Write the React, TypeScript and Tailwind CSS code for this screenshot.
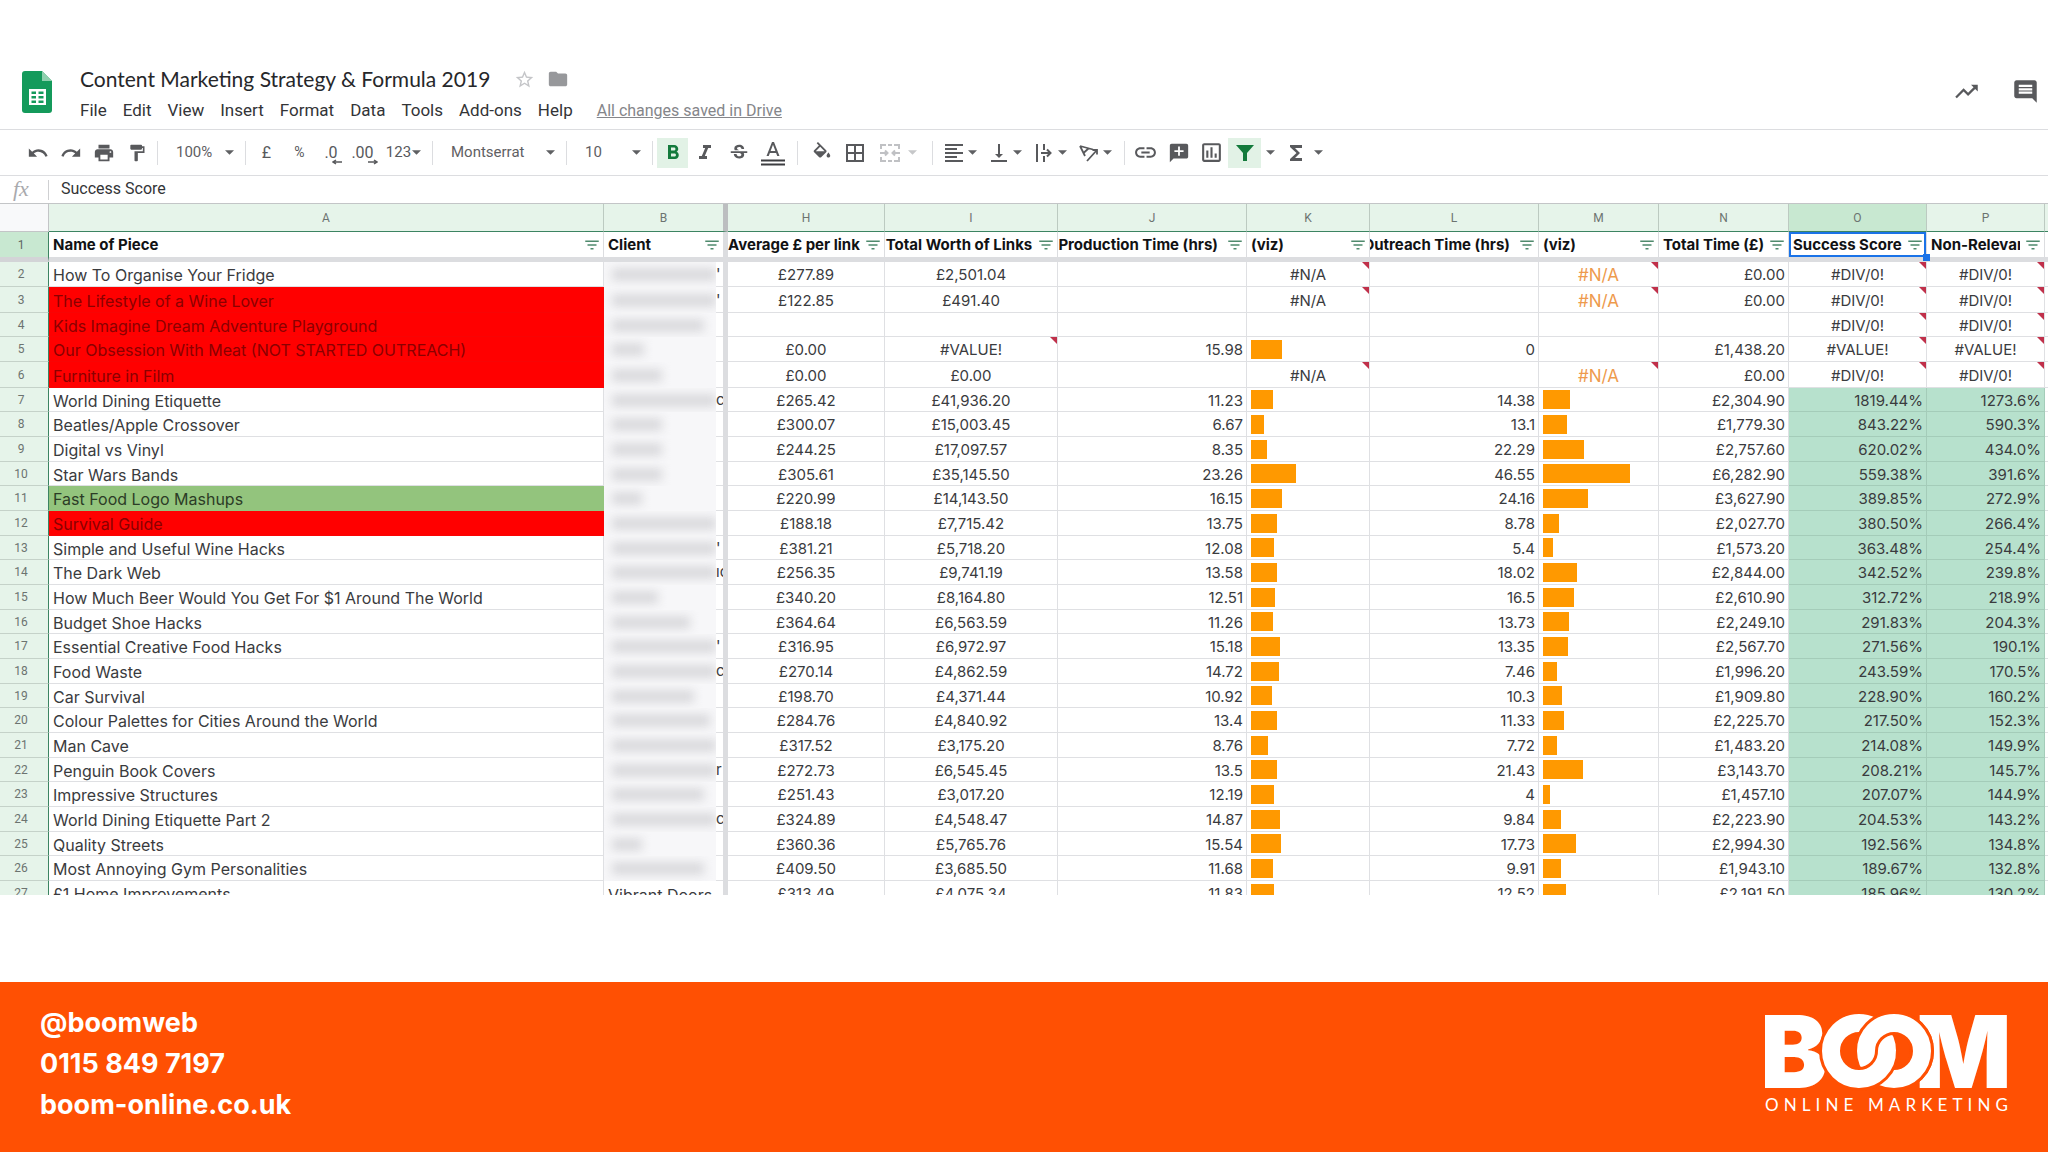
import React from "react";
import clsx from "clsx";
import {
  MdAddComment,
  MdBorderAll,
  MdComment,
  MdFilterList,
  MdFolder,
  MdFormatAlignLeft,
  MdFormatBold,
  MdFormatColorFill,
  MdFormatItalic,
  MdFormatPaint,
  MdFunctions,
  MdInsertLink,
  MdOutlineInsertChart,
  MdPrint,
  MdRedo,
  MdStarBorder,
  MdStrikethroughS,
  MdTrendingUp,
  MdUndo,
  MdVerticalAlignBottom,
} from "react-icons/md";

interface IRow {
  name: string;
  // width in px of the redacted client name and what sticks out after it
  client: number;
  rest?: string;
  values: string[];
}

// values: avg per link, total worth, production, outreach, total time, score, non-relevant
const rows: IRow[] = [
  { name: "How To Organise Your Fridge", client: 104, rest: "'", values: ["£277.89", "£2,501.04", "#N/A", "#N/A", "£0.00", "#DIV/0!", "#DIV/0!"] },
  { name: "The Lifestyle of a Wine Lover", client: 104, rest: "'", values: ["£122.85", "£491.40", "#N/A", "#N/A", "£0.00", "#DIV/0!", "#DIV/0!"] },
  { name: "Kids Imagine Dream Adventure Playground", client: 92, values: ["", "", "", "", "", "#DIV/0!", "#DIV/0!"] },
  { name: "Our Obsession With Meat (NOT STARTED OUTREACH)", client: 32, values: ["£0.00", "#VALUE!", "15.98", "0", "£1,438.20", "#VALUE!", "#VALUE!"] },
  { name: "Furniture in Film", client: 50, values: ["£0.00", "£0.00", "#N/A", "#N/A", "£0.00", "#DIV/0!", "#DIV/0!"] },
  { name: "World Dining Etiquette", client: 104, rest: "c", values: ["£265.42", "£41,936.20", "11.23", "14.38", "£2,304.90", "1819.44%", "1273.6%"] },
  { name: "Beatles/Apple Crossover", client: 50, values: ["£300.07", "£15,003.45", "6.67", "13.1", "£1,779.30", "843.22%", "590.3%"] },
  { name: "Digital vs Vinyl", client: 50, values: ["£244.25", "£17,097.57", "8.35", "22.29", "£2,757.60", "620.02%", "434.0%"] },
  { name: "Star Wars Bands", client: 50, values: ["£305.61", "£35,145.50", "23.26", "46.55", "£6,282.90", "559.38%", "391.6%"] },
  { name: "Fast Food Logo Mashups", client: 30, values: ["£220.99", "£14,143.50", "16.15", "24.16", "£3,627.90", "389.85%", "272.9%"] },
  { name: "Survival Guide", client: 104, values: ["£188.18", "£7,715.42", "13.75", "8.78", "£2,027.70", "380.50%", "266.4%"] },
  { name: "Simple and Useful Wine Hacks", client: 104, rest: "'", values: ["£381.21", "£5,718.20", "12.08", "5.4", "£1,573.20", "363.48%", "254.4%"] },
  { name: "The Dark Web", client: 104, rest: "ıc", values: ["£256.35", "£9,741.19", "13.58", "18.02", "£2,844.00", "342.52%", "239.8%"] },
  { name: "How Much Beer Would You Get For $1 Around The World", client: 46, values: ["£340.20", "£8,164.80", "12.51", "16.5", "£2,610.90", "312.72%", "218.9%"] },
  { name: "Budget Shoe Hacks", client: 78, values: ["£364.64", "£6,563.59", "11.26", "13.73", "£2,249.10", "291.83%", "204.3%"] },
  { name: "Essential Creative Food Hacks", client: 104, rest: "'", values: ["£316.95", "£6,972.97", "15.18", "13.35", "£2,567.70", "271.56%", "190.1%"] },
  { name: "Food Waste", client: 104, rest: "c", values: ["£270.14", "£4,862.59", "14.72", "7.46", "£1,996.20", "243.59%", "170.5%"] },
  { name: "Car Survival", client: 82, values: ["£198.70", "£4,371.44", "10.92", "10.3", "£1,909.80", "228.90%", "160.2%"] },
  { name: "Colour Palettes for Cities Around the World", client: 98, values: ["£284.76", "£4,840.92", "13.4", "11.33", "£2,225.70", "217.50%", "152.3%"] },
  { name: "Man Cave", client: 104, values: ["£317.52", "£3,175.20", "8.76", "7.72", "£1,483.20", "214.08%", "149.9%"] },
  { name: "Penguin Book Covers", client: 104, rest: "r", values: ["£272.73", "£6,545.45", "13.5", "21.43", "£3,143.70", "208.21%", "145.7%"] },
  { name: "Impressive Structures", client: 92, values: ["£251.43", "£3,017.20", "12.19", "4", "£1,457.10", "207.07%", "144.9%"] },
  { name: "World Dining Etiquette Part 2", client: 104, rest: "c", values: ["£324.89", "£4,548.47", "14.87", "9.84", "£2,223.90", "204.53%", "143.2%"] },
  { name: "Quality Streets", client: 30, values: ["£360.36", "£5,765.76", "15.54", "17.73", "£2,994.30", "192.56%", "134.8%"] },
  { name: "Most Annoying Gym Personalities", client: 92, values: ["£409.50", "£3,685.50", "11.68", "9.91", "£1,943.10", "189.67%", "132.8%"] },
  { name: "£1 Home Improvements", client: 0, values: ["£313.49", "£4,075.34", "11.83", "12.52", "£2,191.50", "185.96%", "130.2%"] },
];

const columns = [
  { letter: "A", title: "Name of Piece", width: "" },
  { letter: "B", title: "Client", width: "w-[124px]" },
  { letter: "H", title: "Average £ per link", width: "w-[157px]", align: "center" },
  { letter: "I", title: "Total Worth of Links", width: "w-[173px]", align: "center" },
  { letter: "J", title: "Production Time (hrs)", width: "w-[189px]", align: "end" },
  { letter: "K", title: "(viz)", width: "w-[123px]" },
  { letter: "L", title: "Outreach Time (hrs)", width: "w-[169px]", align: "end" },
  { letter: "M", title: "(viz)", width: "w-[120px]" },
  { letter: "N", title: "Total Time (£)", width: "w-[130px]" },
  { letter: "O", title: "Success Score", width: "w-[138px]" },
  { letter: "P", title: "Non-Relevant", width: "w-[118px]" },
];

const menus = ["File", "Edit", "View", "Insert", "Format", "Data", "Tools", "Add-ons", "Help"];

const isError = (value: string) => value.startsWith("#");

const Separator = ({ wide }: { wide?: boolean }) => (
  <div className={clsx("h-6 w-px shrink-0 bg-[#dcdde0]", wide ? "mx-[7px]" : "mx-1")} />
);

const Caret = ({ faded }: { faded?: boolean }) => (
  <svg viewBox="0 0 10 5" className={clsx("h-[5px] w-[9px] shrink-0", faded ? "text-[#c6c7c9]" : "text-[#5f6063]")}>
    <path d="M0 0h10L5 5z" fill="currentColor" />
  </svg>
);

interface IToolProps {
  label: string;
  active?: boolean;
  className?: string;
  children: React.ReactNode;
}

const Tool: React.FC<IToolProps> = ({ label, active, className, children }) => (
  <button
    type="button"
    aria-label={label}
    className={clsx(
      "flex h-[30px] shrink-0 items-center justify-center",
      className ?? "w-[33px]",
      active ? "bg-[#e2f2e6] text-[#137a3c]" : "text-[#58595c]"
    )}
  >
    {children}
  </button>
);

// icon with its own drop-down arrow
const SplitTool: React.FC<IToolProps> = ({ label, children }) => (
  <button type="button" aria-label={label} className="flex h-[30px] w-[45px] shrink-0 items-center text-[#58595c]">
    <span className="flex w-[28px] justify-center">{children}</span>
    <Caret />
  </button>
);

const Picker = ({ label, value, className }: { label: string; value: string; className: string }) => (
  <label className={clsx("relative flex shrink-0 items-center", className)}>
    <select
      aria-label={label}
      className="w-full appearance-none bg-transparent pl-[14px] font-['Roboto',sans-serif] text-[15px] text-[#5f6063] outline-none"
    >
      <option>{value}</option>
    </select>
    <span className="pointer-events-none absolute right-[7px]">
      <Caret />
    </span>
  </label>
);

const DecimalIcon = ({ text, more }: { text: string; more?: boolean }) => (
  <span className="relative font-['Roboto',sans-serif] text-[16px]">
    {text}
    <svg viewBox="0 0 10 6" className="absolute -right-1 bottom-0 h-[6px] w-[10px]">
      <path d={more ? "M0 3h8M6 1l3 2-3 2" : "M10 3H2M4 1L1 3l3 2"} fill="none" stroke="currentColor" strokeWidth="1.5" />
    </svg>
  </span>
);

const Toolbar = () => (
  <div className="flex h-[46px] items-center border-b border-[#dcdde0] pl-[21px]">
    <Tool label="Undo"><MdUndo size={22} /></Tool>
    <Tool label="Redo"><MdRedo size={22} /></Tool>
    <Tool label="Print"><MdPrint size={22} /></Tool>
    <Tool label="Paint format"><MdFormatPaint size={20} /></Tool>
    <Separator />
    <Picker label="Zoom" value="100%" className="w-[79px]" />
    <Separator />
    <Tool label="Format as currency"><span className="font-['Roboto',sans-serif] text-[16px]">£</span></Tool>
    <Tool label="Format as percent"><span className="font-['Roboto',sans-serif] text-[14px]">%</span></Tool>
    <Tool label="Decrease decimal places" className="w-[30px]"><DecimalIcon text=".0" /></Tool>
    <Tool label="Increase decimal places"><DecimalIcon text=".00" more /></Tool>
    <Tool label="More formats" className="w-[49px] gap-px">
      <span className="font-['Roboto',sans-serif] text-[15px]">123</span>
      <Caret />
    </Tool>
    <Separator />
    <Picker label="Font" value="Montserrat" className="w-[125px]" />
    <Separator />
    <Picker label="Font size" value="10" className="w-[77px]" />
    <Separator />
    <Tool label="Bold" active className="w-[31px]"><MdFormatBold size={24} /></Tool>
    <Tool label="Italic" className="w-[34px]"><MdFormatItalic size={24} /></Tool>
    <Tool label="Strikethrough" className="w-[34px]"><MdStrikethroughS size={22} /></Tool>
    <Tool label="Text colour" className="w-[34px]">
      <svg viewBox="0 0 24 26" className="h-[26px] w-6">
        <path d="M11 2L5.500 16h2.250l1.120-3h6.250l1.120 3h2.250L13 2h-2zm-1.380 9L12 4.670 14.380 11H9.620z" fill="currentColor" />
        <path d="M0 20.500h24M0 24.500h24" stroke="#3c3d40" strokeWidth="1.800" />
      </svg>
    </Tool>
    <Separator wide />
    <Tool label="Fill colour"><MdFormatColorFill size={22} className="[clip-path:inset(0_0_18%_0)]" /></Tool>
    <Tool label="Borders"><MdBorderAll size={24} /></Tool>
    <button type="button" aria-label="Merge cells" className="flex w-[54px] shrink-0 items-center gap-2 pl-[9px] text-[#c0c1c4]">
      <svg viewBox="0 0 20 18" className="h-[18px] w-5" fill="none" stroke="currentColor" strokeWidth="2">
        <path d="M6 1H1v4M8 1h4M14 1h5v4M1 13v4h5M8 17h4M19 13v4h-5M0 9h7M13 9h7M5 6.500L7.500 9 5 11.500M15 6.500L12.500 9l2.500 2.500" />
      </svg>
      <Caret faded />
    </button>
    <Separator wide />
    <SplitTool label="Horizontal align"><MdFormatAlignLeft size={24} /></SplitTool>
    <SplitTool label="Vertical align"><MdVerticalAlignBottom size={24} /></SplitTool>
    <SplitTool label="Text wrapping">
      <svg viewBox="0 0 18 18" className="h-[18px] w-[18px]" fill="none" stroke="currentColor" strokeWidth="2">
        <path d="M2 0v18M9 0v6M9 12v6M6 9h9M12 5.500L15.500 9 12 12.500" />
      </svg>
    </SplitTool>
    <SplitTool label="Text rotation">
      <svg viewBox="0 0 20 18" className="h-[18px] w-5" fill="none" stroke="currentColor" strokeWidth="1.800">
        <path d="M1 2l13 3.500M1 2l5 10M4.500 9l5.500-5M8 17L18 6M13.500 6H18v4.500" />
      </svg>
    </SplitTool>
    <Separator />
    <Tool label="Insert link"><MdInsertLink size={25} /></Tool>
    <Tool label="Insert comment"><MdAddComment size={22} className="-scale-x-100" /></Tool>
    <Tool label="Insert chart"><MdOutlineInsertChart size={25} /></Tool>
    <Tool label="Filter" active>
      <svg viewBox="0 0 18 16" className="h-4 w-[18px]">
        <path d="M0 0h18l-7 8v8H7V8z" fill="currentColor" />
      </svg>
    </Tool>
    <Tool label="Filter views" className="w-[18px]"><Caret /></Tool>
    <Tool label="Functions"><MdFunctions size={24} /></Tool>
    <Tool label="More functions" className="w-3"><Caret /></Tool>
  </div>
);

const SheetsLogo = () => (
  <svg viewBox="0 0 30 42" className="h-[42px] w-[30px]">
    <path d="M3 0h17l10 10v29a3 3 0 0 1-3 3H3a3 3 0 0 1-3-3V3a3 3 0 0 1 3-3z" fill="#149a5b" />
    <path d="M20 0l10 10H20z" fill="#8fd0ae" />
    <path d="M7 18h17v16H7zM9.500 20.500v2.500h4.500v-2.500zM16.500 20.500v2.500h5v-2.500zM9.500 25v2.500h4.500V25zM16.500 25v2.500h5V25zM9.500 29.500V32h4.500v-2.500zM16.500 29.500V32h5v-2.500z" fill="#fff" fillRule="evenodd" />
  </svg>
);

const TitleBar = () => (
  <header className="flex h-[82px] items-start justify-between border-b border-[#dcdde0] font-['Roboto',sans-serif]">
    <div className="flex pl-[22px]">
      <div className="pt-[23px]">
        <SheetsLogo />
      </div>
      <div className="pl-7 pt-[17px]">
        <div className="flex h-7 items-center">
          <h1 className="font-['Lato',sans-serif] text-[21px] text-[#26272a]">Content Marketing Strategy &amp; Formula 2019</h1>
          <button type="button" aria-label="Star" className="ml-6 text-[#c4c5c8]"><MdStarBorder size={21} /></button>
          <button type="button" aria-label="Move to folder" className="ml-3 text-[#97989b]"><MdFolder size={22} /></button>
        </div>
        <nav className="flex h-9 items-center gap-4 text-[17px] text-[#333437]">
          {menus.map((menu) => (
            <button type="button" key={menu}>{menu}</button>
          ))}
          <a href="#" className="ml-2 text-[16px] text-[#85868a] underline">All changes saved in Drive</a>
        </nav>
      </div>
    </div>
    <div className="flex items-center gap-8 pr-[9px] pt-[30px] text-[#58595c]">
      <button type="button" aria-label="Activity"><MdTrendingUp size={27} /></button>
      <button type="button" aria-label="Comments"><MdComment size={27} /></button>
    </div>
  </header>
);

const FormulaBar = () => (
  <div className="flex h-7 items-center border-b border-[#c3c5c7]">
    <label htmlFor="formula" className="w-12 pb-0.5 pl-[13px] font-['Liberation_Serif',serif] text-[22px] leading-6 italic text-[#a9aaad]">fx</label>
    <div className="h-5 w-px bg-[#cfd0d2]" />
    <input id="formula" defaultValue="Success Score" className="flex-1 pb-0.5 pl-3 font-['Roboto',sans-serif] text-[16px] text-[#333437] outline-none" />
  </div>
);

const ErrorMark = () => (
  <svg viewBox="0 0 7 7" className="absolute top-0 right-0 h-[7px] w-[7px]">
    <path d="M0 0h7v7z" fill="#c0304a" />
  </svg>
);

interface ICellProps {
  value: string;
  align?: "center" | "right";
  highlight?: boolean;
  className?: string;
}

const Cell: React.FC<ICellProps> = ({ value, align, highlight, className }) => (
  <td
    className={clsx(
      "relative border-r border-b px-1 pt-0.5",
      highlight ? "border-[#a4ccb9] bg-[#b7e1cd]" : "border-[#dfe0e3]",
      align === "right" && !isError(value) ? "pr-[3px] text-right" : "text-center",
      className
    )}
  >
    {value}
    {isError(value) && <ErrorMark />}
  </td>
);

const VizCell = ({ value, scale, accent }: { value: string; scale: number; accent?: boolean }) => {
  if (isError(value)) {
    return <Cell value={value} className={accent ? "text-[17px] text-[#ee9a4d]" : ""} />;
  }
  return (
    <td className="border-r border-b border-[#dfe0e3] pl-1">
      {Number(value) > 0 && <div className="h-[19px] bg-[#ff9900]" style={{ width: Math.round(Number(value) * scale) }} />}
    </td>
  );
};

const nameColour = (num: number) => {
  if ((num >= 3 && num <= 6) || num === 12) return "bg-[#ff0000] border-[#f80404] text-[#8a0000]";
  if (num === 11) return "bg-[#93c47d] border-[#93c47d] text-[#2c3c26]";
  return "border-[#dfe0e3]";
};

const rowHeight = (num: number) => {
  if (num === 3 || num === 6) return "h-[26px]";
  return num % 3 === 1 ? "h-6" : "h-[25px]";
};

const ClientCell = ({ row, height }: { row: IRow; height: string }) => (
  <td className="border-r-[5px] border-[#dcdde0] p-0">
    {row.client ? (
      <div className={clsx("flex", height)}>
        <div className="flex w-[112px] items-center overflow-hidden bg-[#f7f7f9] pl-2">
          <div className="h-[13px] bg-[#dadadd] blur-[5px]" style={{ width: row.client }} />
        </div>
        <div className="flex flex-1 items-center overflow-hidden border-b border-[#dfe0e3]">{row.rest}</div>
      </div>
    ) : (
      <div className="px-1 pt-0.5 text-[16px] whitespace-nowrap">Vibrant Doors</div>
    )}
  </td>
);

const Sheet = () => (
  <table className="w-full table-fixed border-separate border-spacing-0 font-['Inter',sans-serif] text-[15px] leading-5 text-[#3a3b3e]">
    <colgroup>
      <col className="w-[49px]" />
      {columns.map((col) => (
        <col key={col.letter} className={col.width} />
      ))}
      <col className="w-[3px]" />
    </colgroup>
    <thead>
      <tr className="h-7 bg-[#e6f4ea] font-['Roboto',sans-serif] text-[12px] text-[#6c7370]">
        <td className="border-r border-b border-[#c3c5c7] bg-[#f8f9fa]" />
        {columns.map((col) => (
          <th
            key={col.letter}
            scope="col"
            className={clsx(
              "border-b border-b-[#3c8462] font-normal",
              col.letter === "B" ? "border-r-[5px] border-r-[#bcbec0]" : "border-r border-r-[#bccac1]",
              col.letter === "O" && "bg-[#c8e8d1]"
            )}
          >
            {col.letter}
          </th>
        ))}
        <td className="border-b border-b-[#3c8462]" />
      </tr>
      <tr className="h-[30px]">
        <th scope="row" className="border-r border-b-[5px] border-r-[#3c8462] border-b-[#d3d4d7] bg-[#c8e8d1] pr-1.5 font-['Roboto',sans-serif] text-[12px] font-normal text-[#5f6663]">1</th>
        {columns.map((col) => (
          <th
            key={col.letter}
            scope="col"
            className={clsx(
              "relative border-b-[5px] border-[#dcdde0] p-0 font-bold text-[#111214]",
              col.letter === "B" ? "border-r-[5px]" : "border-r"
            )}
          >
            <div className="flex h-[25px] items-center">
              <span
                className={clsx(
                  "flex flex-1 overflow-hidden whitespace-nowrap",
                  col.align === "center" && "justify-center",
                  col.align === "end" && "mr-1 justify-end",
                  !col.align && "pl-1"
                )}
              >
                {col.title}
              </span>
              <button type="button" aria-label={"Filter " + col.letter} className="mr-0.5 ml-1 text-[#4f8a6d]">
                <MdFilterList size={18} />
              </button>
            </div>
            {col.letter === "O" && (
              <>
                <div className="absolute inset-0 border-2 border-[#1a73e8]" />
                <div className="absolute -right-1 -bottom-1 z-10 h-[7px] w-[7px] bg-[#1a73e8]" />
              </>
            )}
          </th>
        ))}
        <td className="border-b-[5px] border-[#dcdde0]" />
      </tr>
    </thead>
    <tbody>
      {rows.map((row, index) => {
        const num = index + 2;
        const [average, worth, production, outreach, total, score, relevant] = row.values;
        return (
          <tr key={row.name} className={rowHeight(num)}>
            <th scope="row" className="border-r border-b border-r-[#3c8462] border-b-[#c5d2c9] bg-[#e6f4ea] p-0 pr-1.5 font-['Roboto',sans-serif] text-[12px] font-normal text-[#6c7370]">
              {num}
            </th>
            <td className={clsx("border-r border-b px-1 pt-0.5 text-[16px] whitespace-nowrap", nameColour(num))}>{row.name}</td>
            <ClientCell row={row} height={rowHeight(num)} />
            <Cell value={average} />
            <Cell value={worth} />
            <Cell value={isError(production) ? "" : production} align="right" />
            <VizCell value={production} scale={1.92} />
            <Cell value={isError(outreach) ? "" : outreach} align="right" />
            <VizCell value={outreach} scale={1.86} accent />
            <Cell value={total} align="right" />
            <Cell value={score} align="right" highlight={num > 6} />
            <Cell value={relevant} align="right" highlight={num > 6} />
            <td className="border-b border-[#dfe0e3]" />
          </tr>
        );
      })}
    </tbody>
  </table>
);

const BoomLogo = () => (
  <svg viewBox="0 0 248 112" className="h-28 w-[248px]" role="img" aria-label="Boom Online Marketing">
    <g fill="#fff" className="font-['Inter',sans-serif] font-black">
      <text x="-5" y="78" fontSize="101">B</text>
      <text x="150" y="78" fontSize="101">M</text>
    </g>
    <g fill="none">
      <circle cx="94" cy="41" r="28" stroke="#ff5003" strokeWidth="24" />
      <circle cx="129" cy="41" r="28" stroke="#ff5003" strokeWidth="24" />
      <circle cx="94" cy="41" r="28" stroke="#fff" strokeWidth="18" />
      {/* right ring goes over the left one at the top, under it at the bottom */}
      <circle cx="129" cy="41" r="28" stroke="#ff5003" strokeWidth="24" />
      <circle cx="129" cy="41" r="28" stroke="#fff" strokeWidth="18" />
      <path d="M122 41A28 28 0 0 1 94 69" stroke="#ff5003" strokeWidth="24" />
      <path d="M122 40A28 28 0 0 1 93 69" stroke="#fff" strokeWidth="18" />
    </g>
    <text x="0" y="101" fontSize="17" fill="#fff" className="font-['Lato',sans-serif] tracking-[0.3em]">ONLINE MARKETING</text>
  </svg>
);

const Footer = () => (
  <footer className="mt-[87px] flex h-[170px] shrink-0 justify-between bg-[#ff5003] pt-5 pr-[35px] pl-10 text-white">
    <address className="font-['Inter',sans-serif] text-[27px] leading-[41px] font-bold not-italic">
      <p>@boomweb</p>
      <p>0115 849 7197</p>
      <a href="#">boom-online.co.uk</a>
    </address>
    <div className="pt-2">
      <BoomLogo />
    </div>
  </footer>
);

const App = () => {
  return (
    <div className="flex h-screen flex-col bg-white pt-12">
      <TitleBar />
      <Toolbar />
      <FormulaBar />
      <main className="min-h-0 flex-1 overflow-hidden">
        <Sheet />
      </main>
      <Footer />
    </div>
  );
};

export default App;
